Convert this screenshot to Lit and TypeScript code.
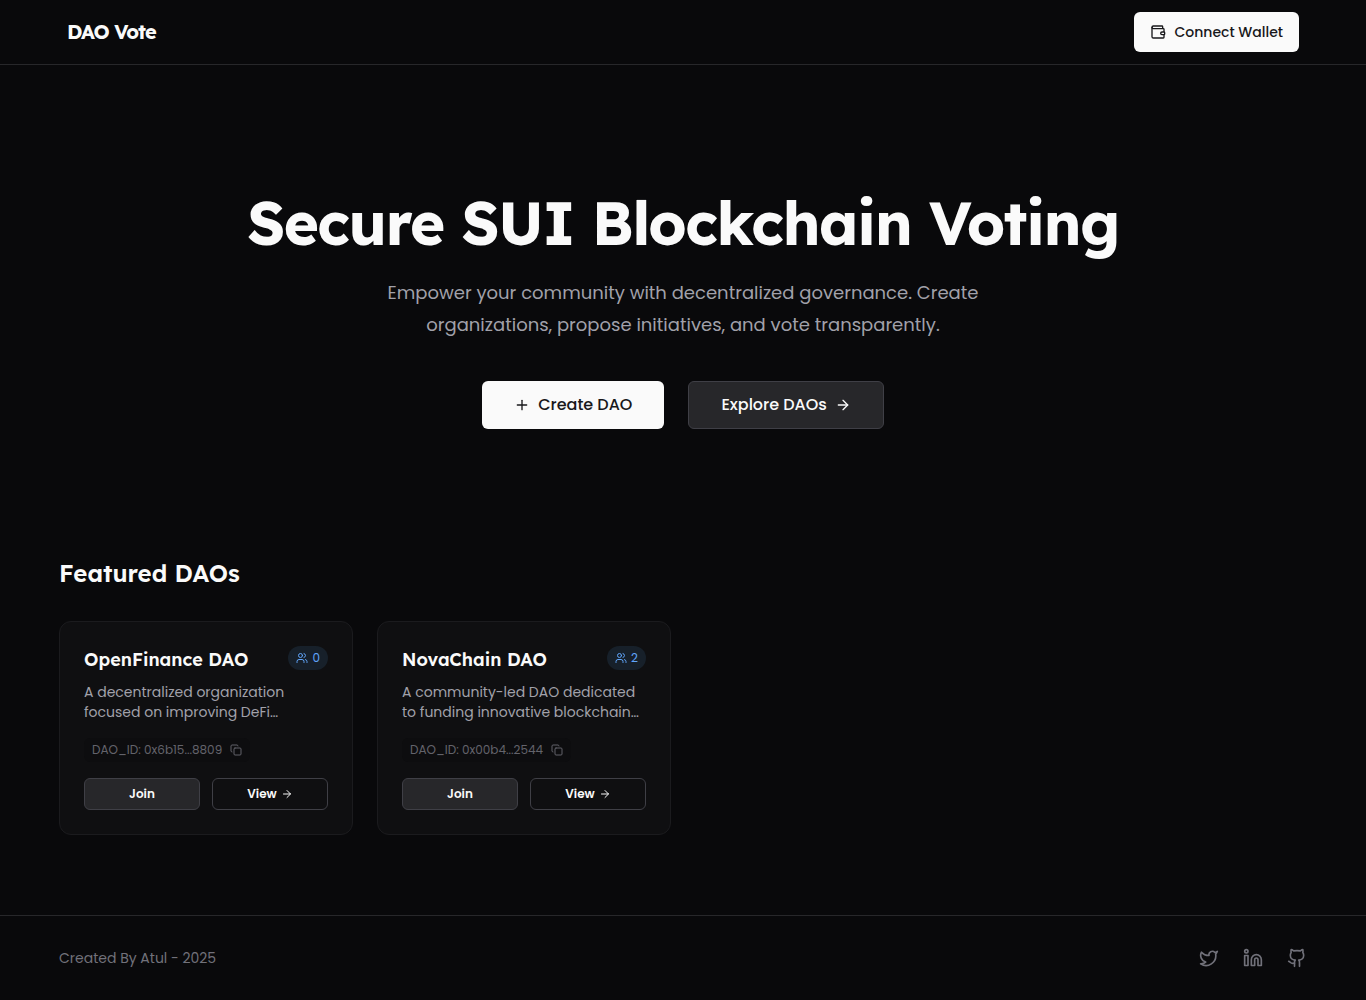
import { LitElement, html, css, svg } from "lit";
import { customElement, property } from "lit/decorators.js";

const icons = {
  wallet: svg`<path d="M19 7V4a1 1 0 0 0-1-1H5a2 2 0 0 0 0 4h15a1 1 0 0 1 1 1v4h-3a2 2 0 0 0 0 4h3a1 1 0 0 0 1-1v-2a1 1 0 0 0-1-1"/><path d="M3 5v14a2 2 0 0 0 2 2h15a1 1 0 0 0 1-1v-4"/>`,
  plus: svg`<path d="M5 12h14"/><path d="M12 5v14"/>`,
  arrow: svg`<path d="M5 12h14"/><path d="m12 5 7 7-7 7"/>`,
  users: svg`<path d="M16 21v-2a4 4 0 0 0-4-4H6a4 4 0 0 0-4 4v2"/><circle cx="9" cy="7" r="4"/><path d="M22 21v-2a4 4 0 0 0-3-3.87"/><path d="M16 3.13a4 4 0 0 1 0 7.75"/>`,
  copy: svg`<rect width="14" height="14" x="8" y="8" rx="2" ry="2"/><path d="M4 16c-1.1 0-2-.9-2-2V4c0-1.1.9-2 2-2h10c1.1 0 2 .9 2 2"/>`,
  twitter: svg`<path d="M22 4s-.7 2.1-2 3.4c1.6 10-9.4 17.3-18 11.6 2.2.1 4.4-.6 6-2C3 15.5.5 9.6 3 5c2.2 2.6 5.6 4.1 9 4-.9-4.2 4-6.6 7-3.8 1.1 0 3-1.2 3-1.2z"/>`,
  linkedin: svg`<path d="M16 8a6 6 0 0 1 6 6v7h-4v-7a2 2 0 0 0-4 0v7h-4v-7a6 6 0 0 1 6-6z"/><rect width="4" height="12" x="2" y="9"/><circle cx="4" cy="4" r="2"/>`,
  github: svg`<path d="M15 22v-4a4.8 4.8 0 0 0-1-3.5c3 0 6-2 6-5.5.08-1.25-.27-2.48-1-3.5.28-1.15.28-2.35 0-3.5 0 0-1 0-3 1.5-2.64-.5-5.36-.5-8 0C6 2 5 2 5 2c-.3 1.15-.3 2.35 0 3.5A5.403 5.403 0 0 0 4 9c0 3.5 3 5.5 6 5.5-.39.49-.68 1.05-.85 1.65-.17.6-.22 1.23-.15 1.85v4"/><path d="M9 18c-4.51 2-5-2-7-2"/>`,
};

type IconName = keyof typeof icons;

interface Dao {
  name: string;
  members: number;
  description: string;
  shortId: string;
}

const daos: Dao[] = [
  {
    name: "OpenFinance DAO",
    members: 0,
    description: "A decentralized organization focused on improving DeFi…",
    shortId: "0x6b15...8809",
  },
  {
    name: "NovaChain DAO",
    members: 2,
    description: "A community-led DAO dedicated to funding innovative blockchain…",
    shortId: "0x00b4...2544",
  },
];

@customElement("app-icon")
class AppIcon extends LitElement {
  @property() name: IconName = "plus";

  static styles = css`
    :host {
      display: block;
      flex: none;
      width: 16px;
      height: 16px;
    }
    .glyph {
      display: block;
      width: 100%;
      height: 100%;
      fill: none;
      stroke: currentColor;
      stroke-width: 2;
      stroke-linecap: round;
      stroke-linejoin: round;
    }
  `;

  render() {
    return html`<svg class="glyph" viewBox="0 0 24 24" aria-hidden="true">${icons[this.name]}</svg>`;
  }
}

const controls = css`
  * {
    box-sizing: border-box;
  }
  .button {
    display: inline-flex;
    align-items: center;
    justify-content: center;
    gap: 8px;
    margin: 0;
    border: 0;
    border-radius: 6px;
    background: transparent;
    color: #fafafa;
    font-family: inherit;
    font-weight: 500;
    white-space: nowrap;
    cursor: pointer;
  }
  .primary {
    background: #fafafa;
    color: #18181b;
  }
  .secondary {
    border: 1px solid #3f3f46;
    background: #27272a;
  }
  .outline {
    border: 1px solid #3f3f46;
  }
`;

@customElement("dao-card")
class DaoCard extends LitElement {
  @property({ attribute: false }) dao!: Dao;

  static styles = [
    controls,
    css`
      :host {
        display: block;
        min-width: 0;
      }
      .card {
        display: flex;
        flex-direction: column;
        gap: 16px;
        padding: 24px;
        border: 1px solid #1b1b1e;
        border-radius: 12px;
        background: #0f0f11;
      }
      .summary {
        display: flex;
        flex-direction: column;
        gap: 8px;
      }
      .top {
        display: flex;
        align-items: flex-start;
        justify-content: space-between;
        gap: 8px;
      }
      .name {
        margin: 0;
        color: #fafafa;
        font-family: var(--heading-font);
        font-size: 18px;
        line-height: 28px;
        font-weight: 600;
      }
      .members {
        display: flex;
        align-items: center;
        gap: 4px;
        padding: 4px 8px;
        border-radius: 12px;
        background: #17202a;
        color: #60a5fa;
        font-size: 12px;
        line-height: 16px;
      }
      .members app-icon,
      .copy app-icon {
        width: 12px;
        height: 12px;
      }
      .description {
        margin: 0;
        color: #a1a1aa;
        font-size: 14px;
        line-height: 20px;
      }
      .identifier {
        display: flex;
        align-items: center;
        align-self: flex-start;
        gap: 8px;
        padding: 4px 8px;
        border-radius: 6px;
        background: #0d0d0f;
        color: #63636b;
        font-size: 12px;
        line-height: 16px;
      }
      .copy {
        padding: 0;
        border: 0;
        background: none;
        color: #63636b;
        cursor: pointer;
      }
      .actions {
        display: grid;
        grid-template-columns: 1fr 1fr;
        gap: 12px;
      }
      .small {
        height: 32px;
        gap: 4px;
        font-size: 12px;
        line-height: 16px;
        font-weight: 600;
        text-decoration: none;
      }
      .small app-icon {
        width: 12px;
        height: 12px;
      }
    `,
  ];

  render() {
    const { name, members, description, shortId } = this.dao;
    return html`
      <article class="card">
        <div class="summary">
          <div class="top">
            <h3 class="name">${name}</h3>
            <span class="members"><app-icon name="users"></app-icon>${members}</span>
          </div>
          <p class="description">${description}</p>
        </div>
        <div class="identifier">
          <span>DAO_ID: ${shortId}</span>
          <button class="copy" type="button" aria-label="Copy DAO ID">
            <app-icon name="copy"></app-icon>
          </button>
        </div>
        <div class="actions">
          <button class="button secondary small" type="button">Join</button>
          <a class="button outline small" href="#dao">View<app-icon name="arrow"></app-icon></a>
        </div>
      </article>
    `;
  }
}

@customElement("app-root")
class AppRoot extends LitElement {
  static styles = [
    controls,
    css`
      :host {
        --body-font: Poppins, Inter, "Liberation Sans", sans-serif;
        --heading-font: Lexend, Inter, "Liberation Sans", sans-serif;
        display: flex;
        flex-direction: column;
        min-height: 100vh;
        background: #09090b;
        color: #fafafa;
        font-family: var(--body-font);
      }
      .header {
        border-bottom: 1px solid #27272a;
      }
      .container {
        width: 100%;
        max-width: 1280px;
        margin: 0 auto;
        padding: 0 16px;
      }
      .bar {
        display: flex;
        align-items: center;
        justify-content: space-between;
        padding: 12px 24px;
      }
      .brand {
        color: #fafafa;
        font-family: var(--heading-font);
        font-size: 20px;
        line-height: 28px;
        font-weight: 700;
        letter-spacing: -0.05em;
        text-decoration: none;
      }
      .connect {
        height: 40px;
        padding: 0 16px;
        font-size: 14px;
        line-height: 20px;
      }
      .main {
        flex: 1;
      }
      .hero {
        display: flex;
        flex-direction: column;
        align-items: center;
        padding: 128px 16px;
        text-align: center;
      }
      .title {
        margin: 0;
        font-family: var(--heading-font);
        font-size: 60px;
        line-height: 60px;
        font-weight: 700;
        letter-spacing: -0.025em;
      }
      .lead {
        max-width: 672px;
        margin: 24px 0 40px;
        color: #a1a1aa;
        font-size: 18px;
        line-height: 32px;
      }
      .choices {
        display: flex;
        flex-wrap: wrap;
        justify-content: center;
        gap: 24px;
      }
      .large {
        height: 48px;
        padding: 0 32px;
        font-size: 16px;
        line-height: 24px;
      }
      .featured {
        padding-bottom: 80px;
      }
      .subtitle {
        margin: 0 0 32px;
        font-family: var(--heading-font);
        font-size: 24px;
        line-height: 32px;
        font-weight: 600;
      }
      .grid {
        display: grid;
        grid-template-columns: repeat(auto-fill, minmax(280px, 1fr));
        gap: 24px;
      }
      .footer {
        border-top: 1px solid #27272a;
      }
      .credits {
        display: flex;
        align-items: center;
        justify-content: space-between;
        padding: 32px 16px;
        color: #71717a;
        font-size: 14px;
        line-height: 20px;
      }
      .links {
        display: flex;
        gap: 24px;
      }
      .link {
        color: #71717a;
      }
      .link app-icon {
        width: 20px;
        height: 20px;
      }
    `,
  ];

  render() {
    return html`
      <header class="header">
        <div class="container bar">
          <a class="brand" href="#home">DAO Vote</a>
          <button class="button primary connect" type="button">
            <app-icon name="wallet"></app-icon>Connect Wallet
          </button>
        </div>
      </header>
      <main class="main">
        <section class="hero">
          <h1 class="title">Secure SUI Blockchain Voting</h1>
          <p class="lead">
            Empower your community with decentralized governance. Create organizations, propose
            initiatives, and vote transparently.
          </p>
          <div class="choices">
            <button class="button primary large" type="button">
              <app-icon name="plus"></app-icon>Create DAO
            </button>
            <button class="button secondary large" type="button">
              Explore DAOs<app-icon name="arrow"></app-icon>
            </button>
          </div>
        </section>
        <section class="container featured">
          <h2 class="subtitle">Featured DAOs</h2>
          <div class="grid">${daos.map((dao) => html`<dao-card .dao=${dao}></dao-card>`)}</div>
        </section>
      </main>
      <footer class="footer">
        <div class="container credits">
          <span>Created By Atul - 2025</span>
          <nav class="links" aria-label="Social">
            <a class="link" href="#twitter" aria-label="Twitter"><app-icon name="twitter"></app-icon></a>
            <a class="link" href="#linkedin" aria-label="LinkedIn"><app-icon name="linkedin"></app-icon></a>
            <a class="link" href="#github" aria-label="GitHub"><app-icon name="github"></app-icon></a>
          </nav>
        </div>
      </footer>
    `;
  }
}
